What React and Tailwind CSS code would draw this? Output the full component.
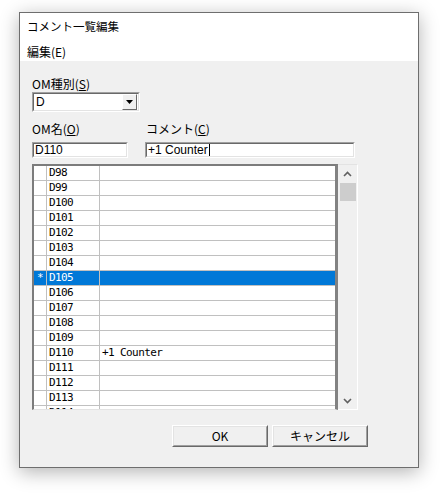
import React from 'react';

const ui = { fontFamily: '"Liberation Sans", "Noto Sans CJK JP", sans-serif' };
const jp = { fontFamily: '"Noto Sans CJK JP", "Liberation Sans", sans-serif' };
const mono = { fontFamily: '"DejaVu Sans Mono", "Liberation Mono", monospace' };

const names = [];
for (let i = 98; i <= 114; i++) names.push('D' + i);

// sunken 3D frame like an old Win32 edit box
const Sunken = ({ className, children }) => (
    <div className={`border border-t-[#a0a0a0] border-l-[#a0a0a0] border-b-white border-r-white ${className}`}>
        <div className="h-full w-full border border-t-[#696969] border-l-[#696969] border-b-[#e3e3e3] border-r-[#e3e3e3] bg-white">
            {children}
        </div>
    </div>
);

const Button = ({ children }) => (
    <div className="w-[96px] h-[22px] border border-t-white border-l-white border-b-[#696969] border-r-[#696969]">
        <div className="h-full w-full border border-t-[#e3e3e3] border-l-[#e3e3e3] border-b-[#a0a0a0] border-r-[#a0a0a0] bg-[#f0f0f0] flex items-center justify-center text-[12px] text-black" style={jp}>
            {children}
        </div>
    </div>
);

const Chevron = ({ up }) => (
    <svg width="9" height="6" viewBox="0 0 9 6">
        <polyline
            points={up ? '1,5 4.5,1.5 8,5' : '1,1 4.5,4.5 8,1'}
            fill="none"
            stroke="#606060"
            strokeWidth="1.6"
        />
    </svg>
);

export default function App() {
    return (
        <div className="min-h-[501px] bg-white pt-[12px] pl-[19px]">
            <div className="w-[400px] h-[456px] border border-[#6e6e6e] bg-[#f0f0f0] flex flex-col shadow-[0_4px_18px_rgba(0,0,0,0.3)]">
                {/* title + menu */}
                <div className="bg-white">
                    <div className="h-[28px] flex items-center pl-[7px] text-[11.5px] text-black" style={jp}>
                        コメント一覧編集
                    </div>
                    <div className="h-[20px] pt-[4px] pl-[7px] text-[12px] leading-[14px] text-black" style={jp}>
                        編集(E)
                    </div>
                </div>

                <div className="flex flex-col pl-[12px] pt-[16px]">
                    {/* OM type */}
                    <div className="h-[15px] text-[12px] leading-[14px] text-black" style={jp}>
                        OM種別(<span className="underline">S</span>)
                    </div>
                    <Sunken className="w-[108px] h-[20px]">
                        <div className="flex h-full items-center">
                            <span className="flex-1 pl-[2px] text-[12px] leading-[14px]" style={ui}>D</span>
                            <div className="w-[15px] h-full border border-t-white border-l-white border-b-[#696969] border-r-[#696969] bg-[#f0f0f0] flex items-center justify-center mr-[1px]">
                                <svg width="7" height="4" viewBox="0 0 7 4">
                                    <polygon points="0,0 7,0 3.5,4" fill="#000" />
                                </svg>
                            </div>
                        </div>
                    </Sunken>

                    {/* name + comment */}
                    <div className="flex mt-[10px]">
                        <div className="flex flex-col w-[113px]">
                            <div className="h-[20px] text-[12px] leading-[14px] text-black" style={jp}>
                                OM名(<span className="underline">O</span>)
                            </div>
                            <Sunken className="w-[96px] h-[16px]">
                                <div className="pl-[1px] text-[12px] leading-[12px]" style={ui}>D110</div>
                            </Sunken>
                        </div>
                        <div className="flex flex-col">
                            <div className="h-[20px] pl-[1px] text-[12px] leading-[14px] text-black" style={jp}>
                                コメント(<span className="underline">C</span>)
                            </div>
                            <Sunken className="w-[210px] h-[16px]">
                                <div className="flex items-center pl-[1px] text-[12px] leading-[12px]" style={ui}>
                                    +1 Counter<span className="inline-block w-[1px] h-[12px] bg-black ml-[1px]" />
                                </div>
                            </Sunken>
                        </div>
                    </div>

                    {/* grid */}
                    <div className="flex mt-[6px] w-[326px] h-[246px]">
                        <div className="w-[306px] h-full border-t-2 border-l-2 border-r-[3px] border-b border-t-[#7c7c7c] border-l-[#7c7c7c] border-r-[#828282] border-b-[#e3e3e3] bg-white">
                            <div className="h-[243px] overflow-hidden">
                                {names.map((n) => {
                                    const sel = n === 'D105';
                                    return (
                                        <div
                                            key={n}
                                            className={`flex h-[15px] border-b border-[#c0c0c0] text-[11px] leading-[14px] tracking-[-0.6px] ${sel ? 'bg-[#0078d7] text-white' : 'text-black'}`}
                                            style={mono}
                                        >
                                            <div className="w-[13px] shrink-0 border-r border-[#c0c0c0] text-center">{sel ? '*' : ''}</div>
                                            <div className="w-[53px] shrink-0 border-r border-[#c0c0c0] pl-[2px]">{n}</div>
                                            <div className="flex-1 pl-[2px] whitespace-pre">{n === 'D110' ? '+1 Counter' : ''}</div>
                                        </div>
                                    );
                                })}
                            </div>
                        </div>
                        <div className="w-[20px] h-full border-t border-t-[#e3e3e3] border-r border-r-white border-b border-b-white bg-[#f0f0f0] flex flex-col items-center">
                            <div className="h-[17px] w-full flex items-center justify-center">
                                <Chevron up />
                            </div>
                            <div className="w-[16px] h-[18px] bg-[#cdcdcd] mt-[1px]" />
                            <div className="flex-1" />
                            <div className="h-[17px] w-full flex items-center justify-center">
                                <Chevron />
                            </div>
                        </div>
                    </div>

                    {/* buttons */}
                    <div className="flex gap-[4px] mt-[15px] ml-[140px]">
                        <Button>OK</Button>
                        <Button>キャンセル</Button>
                    </div>
                </div>
            </div>
        </div>
    );
}
